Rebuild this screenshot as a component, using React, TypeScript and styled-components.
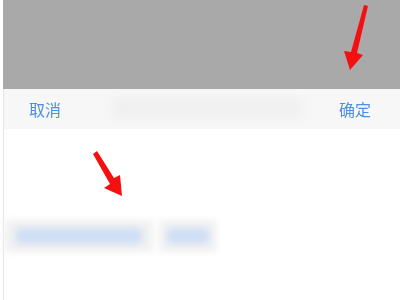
import React from "react";
import styled, { createGlobalStyle } from "styled-components";

const Global = createGlobalStyle`
  html, body { margin: 0; padding: 0; background: #fff; }
  body { width: 400px; height: 300px; overflow: hidden; font-family: "Noto Sans CJK SC", "Noto Sans", sans-serif; }
`;

const Page = styled.div`
  position: relative;
  width: 400px;
  height: 300px;
  display: flex;
  flex-direction: column;
  padding-left: 3px;
  box-sizing: border-box;
  background: #fff;
`;

const Frame = styled.div`
  flex: 1;
  display: flex;
  flex-direction: column;
  border-left: 1px solid #e6e6e6;
`;

const Mask = styled.div`
  height: 89px;
  background: #a9a9a9;
  margin-left: -1px;
`;

const Toolbar = styled.div`
  height: 40px;
  background: #f7f7f7;
  display: flex;
  align-items: center;
  justify-content: space-between;
  padding: 0 29px 0 25px;
  position: relative;
`;

const ToolButton = styled.span`
  color: #4d8fe0;
  font-size: 16px;
  line-height: 1;
  filter: blur(0.3px);
`;

const BlurTitle = styled.div`
  position: absolute;
  left: 108px;
  top: 8px;
  width: 190px;
  height: 22px;
  background: #ececec;
  filter: blur(4px);
  opacity: 0.6;
`;

const Body = styled.div`
  flex: 1;
  padding-top: 91px;
`;

const PillRow = styled.div`
  display: flex;
  gap: 6px;
  filter: blur(3.5px);
`;

const Pill = styled.div<{ $w: number; $bar: number }>`
  width: ${(p) => p.$w}px;
  height: 32px;
  background: #f1f1f1;
  border-radius: 4px;
  display: flex;
  align-items: center;
  justify-content: center;
  &::after {
    content: "";
    width: ${(p) => p.$bar}px;
    height: 16px;
    background: #d0dff6;
    border-radius: 3px;
  }
`;

const Arrow = styled.svg`
  position: absolute;
  overflow: visible;
`;

export default function App() {
  return (
    <>
      <Global />
      <Page>
        <Frame>
          <Mask />
          <Toolbar>
            <BlurTitle />
            <ToolButton>取消</ToolButton>
            <ToolButton>确定</ToolButton>
          </Toolbar>
          <Body>
            <PillRow>
              <Pill $w={149} $bar={126} />
              <Pill $w={58} $bar={42} />
            </PillRow>
          </Body>
        </Frame>
        <Arrow width="400" height="300" style={{ left: 0, top: 0 }}>
          <polygon
            points="364,5 368,6 357,53 363,55 350,70 344,51 351,52"
            fill="#f41010"
          />
          <polygon
            points="93,154 97,151 114,178 120,175 122,196 104,188 110,184"
            fill="#f41010"
          />
        </Arrow>
      </Page>
    </>
  );
}
